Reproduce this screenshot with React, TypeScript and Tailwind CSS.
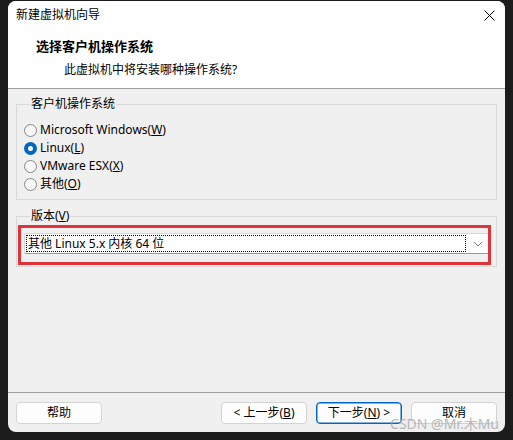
import React from "react";

const font = { fontFamily: '"Noto Sans", "Noto Sans CJK SC", sans-serif' };

function Radio({ checked, children }: { checked?: boolean; children: React.ReactNode }) {
  return (
    <div className="flex h-[18px] items-center">
      {checked ? (
        <span className="flex h-[13px] w-[13px] items-center justify-center rounded-full bg-[#0067c0]">
          <span className="h-[5px] w-[5px] rounded-full bg-white" />
        </span>
      ) : (
        <span className="h-[13px] w-[13px] rounded-full border border-[#868686] bg-[#f7f7f7]" />
      )}
      <span className="ml-[3px] text-[12px] leading-[16px] text-black">{children}</span>
    </div>
  );
}

function Btn({ children, primary }: { children: React.ReactNode; primary?: boolean }) {
  return (
    <div
      className={
        "flex h-[22px] w-[86px] items-center justify-center rounded-[4px] bg-[#fdfdfd] text-[12px] text-black " +
        (primary ? "border border-[#0067c0] shadow-[inset_0_0_0_0.5px_#0067c0]" : "border border-[#d3d3d3]")
      }
    >
      {children}
    </div>
  );
}

export default function App() {
  return (
    <div className="h-[440px] w-[513px] bg-[#1c1c1c] pl-[8px] pt-[1px]" style={font}>
      <div className="relative flex h-[431px] w-[497px] flex-col overflow-hidden rounded-[8px] bg-[#f0f0f0]">
        {/* header */}
        <div className="h-[87px] bg-white">
          <div className="flex h-[28px] items-center justify-between pl-[8px] pr-[10px]">
            <span className="text-[12px] leading-[16px] text-black">新建虚拟机向导</span>
            <svg width="11" height="11" viewBox="0 0 11 11" className="mt-[1px]">
              <path d="M0.5 0.5 L10.5 10.5 M10.5 0.5 L0.5 10.5" stroke="#000" strokeWidth="1" />
            </svg>
          </div>
          <div className="mt-[8px] h-[18px] pl-[28px] text-[13px] font-bold leading-[18px] text-black">
            选择客户机操作系统
          </div>
          <div className="mt-[6px] h-[18px] pl-[56px] text-[12px] leading-[18px] text-black">
            此虚拟机中将安装哪种操作系统?
          </div>
        </div>
        <div className="h-px bg-[#a0a0a0]" />

        {/* body */}
        <div className="flex h-[303px] flex-col px-[8px]">
          <fieldset className="mt-[7px] border border-[#d9d9d9] px-[7px] pb-[6px]">
            <legend className="ml-[6px] px-[1px] text-[12px] leading-[16px] text-black">客户机操作系统</legend>
            <div className="mt-[9px] flex flex-col">
              <Radio>
                Microsoft Windows(<u>W</u>)
              </Radio>
              <Radio checked>
                Linux(<u>L</u>)
              </Radio>
              <Radio>
                VMware ESX(<u>X</u>)
              </Radio>
              <Radio>
                其他(<u>O</u>)
              </Radio>
            </div>
          </fieldset>

          <div className="relative mt-[8px]">
            <fieldset className="border border-[#d9d9d9] px-[7px] pb-[12px]">
              <legend className="ml-[6px] px-[1px] text-[12px] leading-[16px] text-black">
                版本(<u>V</u>)
              </legend>
              <div className="mt-[9px] flex h-[21px] items-center rounded-[2px] border border-[#d6d6d6] border-b-[#9a9a9a] bg-white pl-[1px] pr-[5px]">
                <div className="flex h-[17px] flex-1 items-center border border-dotted border-black pl-[1px] text-[12px] text-black">
                  其他 Linux 5.x 内核 64 位
                </div>
                <svg width="10" height="6" viewBox="0 0 10 6" className="ml-[7px]">
                  <path d="M1 1 L5 5 L9 1" fill="none" stroke="#777" strokeWidth="1" />
                </svg>
              </div>
            </fieldset>
            <div className="pointer-events-none absolute left-[2px] top-[17px] h-[40px] w-[473px] border-[3px] border-[#e0333a]" />
          </div>
        </div>

        <div className="h-px bg-[#a0a0a0]" />

        {/* footer */}
        <div className="flex flex-1 items-start px-[8px] pt-[9px]">
          <Btn>帮助</Btn>
          <div className="ml-auto flex gap-[9px]">
            <Btn>
              &lt; 上一步(<u>B</u>)
            </Btn>
            <Btn primary>
              下一步(<u>N</u>) &gt;
            </Btn>
            <Btn>取消</Btn>
          </div>
        </div>

        <div className="pointer-events-none absolute bottom-[0px] right-[6px] text-[14px] leading-[17px] text-[#a8a8a8] opacity-80">
          CSDN @Mr.木Mu
        </div>
      </div>
    </div>
  );
}
